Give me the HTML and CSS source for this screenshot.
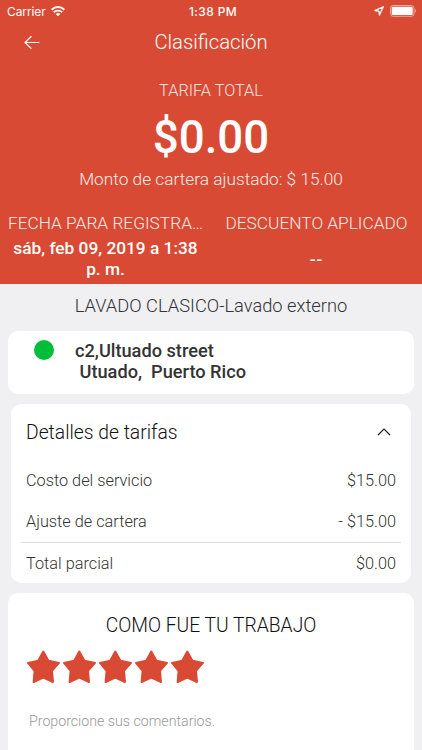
FILE: index.html
```html
<!DOCTYPE html>
<html lang="es">
<head>
    <meta charset="UTF-8">
    <meta name="viewport" content="width=device-width, initial-scale=1.0">
    <title>Clasificación</title>
    <link rel="stylesheet" href="styles.css">
</head>
<body>
    <header class="hero">
        <div class="status-bar">
            <div class="status-left">
                <span class="carrier">Carrier</span>
                <svg class="wifi-icon" viewBox="0 0 14 10" width="14" height="10">
                    <path d="M0.6 3.7a9.2 9.2 0 0 1 12.8 0" fill="none" stroke="#fff" stroke-width="2"/>
                    <path d="M2.8 6.3a6 6 0 0 1 8.4 0" fill="none" stroke="#fff" stroke-width="1.9"/>
                    <path d="M4.7 8a3.3 3.3 0 0 1 4.6 0L7 10.2z" fill="#fff"/>
                </svg>
            </div>
            <span class="status-time">1:38 PM</span>
            <div class="status-right">
                <svg viewBox="0 0 10 10" width="10" height="10">
                    <path d="M9.3 0.8L0.9 4.5l4 0.6 0.6 4z" fill="none" stroke="#fff" stroke-width="1.3" stroke-linejoin="round"/>
                </svg>
                <svg viewBox="0 0 27 12" width="27" height="12">
                    <rect x="0.5" y="0.5" width="23.5" height="10.8" rx="2.6" fill="none" stroke="#fff" stroke-opacity="0.5"/>
                    <rect x="1.7" y="1.7" width="21" height="8.4" rx="1.3" fill="#fff"/>
                    <path d="M25 4v3.8c1.4-.6 1.4-3.2 0-3.8z" fill="#fff" fill-opacity="0.5"/>
                </svg>
            </div>
        </div>

        <nav class="nav-bar">
            <svg class="back-icon" viewBox="0 0 16 14" width="16" height="14">
                <path d="M15.3 7.5H1M7.4 1.2L1 7.5l6.4 6.2" fill="none" stroke="#fff" stroke-width="1.2"/>
            </svg>
            <h1 class="nav-title">Clasificación</h1>
        </nav>

        <p class="fare-label">TARIFA TOTAL</p>
        <p class="fare-total">$0.00</p>
        <p class="wallet-note">Monto de cartera ajustado: $ 15.00</p>

        <div class="summary">
            <div class="summary-item">
                <p class="summary-label">FECHA PARA REGISTRA…</p>
                <p class="summary-value">sáb, feb 09, 2019 a 1:38<br>p. m.</p>
            </div>
            <div class="summary-item">
                <p class="summary-label">DESCUENTO APLICADO</p>
                <p class="summary-value discount">--</p>
            </div>
        </div>
    </header>

    <main class="content">
        <h2 class="service-name">LAVADO CLASICO-Lavado externo</h2>

        <section class="card address-card">
            <span class="dot"></span>
            <p class="address">c2,Ultuado street
 Utuado,  Puerto Rico</p>
        </section>

        <section class="card details-card">
            <div class="details-header">
                <h3 class="details-title">Detalles de tarifas</h3>
                <svg viewBox="0 0 14 8" width="14" height="8">
                    <path d="M1 7l6-6 6 6" fill="none" stroke="#222" stroke-width="1.2"/>
                </svg>
            </div>
            <div class="fare-row"><span>Costo del servicio</span><span>$15.00</span></div>
            <div class="fare-row"><span>Ajuste de cartera</span><span>- $15.00</span></div>
            <div class="fare-row subtotal"><span>Total parcial</span><span>$0.00</span></div>
        </section>

        <section class="card rating-card">
            <h3 class="rating-title">COMO FUE TU TRABAJO</h3>
            <svg class="star-symbol" width="0" height="0">
                <symbol id="star" viewBox="0 0 34 34">
                    <path d="M16.3 1.6L21.4 10.8 32 12.9 25 20.8 26 32 16.3 27.6 6.6 32 7.6 20.8 1 12.9 11.2 10.8z" fill="#d94a34" stroke="#d94a34" stroke-width="2" stroke-linejoin="round"/>
                </symbol>
            </svg>
            <div class="stars">
                <svg class="star"><use href="#star"/></svg>
                <svg class="star"><use href="#star"/></svg>
                <svg class="star"><use href="#star"/></svg>
                <svg class="star"><use href="#star"/></svg>
                <svg class="star"><use href="#star"/></svg>
            </div>
            <p class="comment">Proporcione sus comentarios.</p>
        </section>
    </main>
</body>
</html>
```
FILE: styles.css
```css
* {
    margin: 0;
    padding: 0;
    box-sizing: border-box;
}

body {
    height: 750px;
    overflow: hidden;
    background-color: #f0f0f3;
    color: #333;
    font-family: Roboto, Arial, sans-serif;
    font-weight: 300;
}

svg {
    display: block;
}

.hero {
    height: 284px;
    background-color: #d84a33;
    color: #fff;
    text-align: center;
}

.status-bar {
    display: grid;
    grid-template-columns: 1fr auto 1fr;
    align-items: center;
    height: 22px;
    padding: 0 5px 0 7px;
    font-family: Inter, sans-serif;
    font-size: 12px;
}

.status-left,
.status-right {
    display: flex;
    align-items: center;
    gap: 6px;
}

.status-left {
    gap: 5px;
}

.status-right {
    justify-content: flex-end;
}

.carrier {
    font-weight: 400;
    letter-spacing: -0.1px;
}

.status-time {
    padding-left: 2px;
    font-weight: 500;
    letter-spacing: 0.35px;
}

.nav-bar {
    display: grid;
    grid-template-columns: 16px 1fr 16px;
    align-items: center;
    height: 40px;
    padding: 0 24px;
}

.nav-title {
    font-size: 20.3px;
    font-weight: 300;
}

.fare-label {
    margin-top: 18px;
    font-size: 16.3px;
    line-height: 21px;
    opacity: 0.85;
}

.fare-total {
    margin-top: 12px;
    font-size: 45.7px;
    font-weight: 500;
    line-height: 50px;
}

.wallet-note {
    margin-top: 6px;
    font-size: 17.3px;
    line-height: 21px;
    opacity: 0.9;
}

.summary {
    display: grid;
    grid-template-columns: 1fr 1fr;
    margin-top: 23px;
}

.summary-label {
    font-size: 17.3px;
    line-height: 21px;
    white-space: nowrap;
    opacity: 0.9;
}

.summary-item {
    display: flex;
    flex-direction: column;
    align-items: center;
}

.summary-value {
    display: flex;
    align-items: center;
    height: 50px;
    font-size: 17.3px;
    font-weight: 500;
    line-height: 21px;
}

.discount {
    letter-spacing: 0.8px;
}

.service-name {
    height: 47px;
    font-size: 18.3px;
    font-weight: 300;
    line-height: 43px;
    text-align: center;
}

.card {
    margin: 0 8px;
    background-color: #fff;
    border-radius: 10px;
}

.address-card {
    display: flex;
    height: 63px;
    padding: 9px 26px;
}

.dot {
    width: 20px;
    height: 20px;
    margin-right: 21px;
    background-color: #00bd3b;
    border-radius: 50%;
}

.address {
    font-size: 18.2px;
    font-weight: 500;
    line-height: 21px;
    white-space: pre;
}

.details-card {
    height: 179px;
    margin: 10px 11px;
    padding: 0 10px;
}

.details-header {
    display: flex;
    justify-content: space-between;
    align-items: center;
    height: 56px;
    padding: 0 10px 0 5px;
    color: #111;
}

.details-title {
    font-size: 19.3px;
    font-weight: 300;
}

.fare-row {
    display: flex;
    justify-content: space-between;
    align-items: center;
    height: 41px;
    padding: 0 5px;
    font-size: 16.3px;
}

.subtotal {
    border-top: 1px solid #ddd;
}

.rating-card {
    height: 180px;
    padding: 21px 18px;
}

.rating-title {
    color: #111;
    font-size: 19.3px;
    font-weight: 300;
    line-height: 24px;
    text-align: center;
}

.stars {
    display: flex;
    gap: 2px;
    margin: 12px 1px 0;
}

.star {
    width: 34px;
    height: 34px;
}

.comment {
    margin: 27px 3px 0;
    color: #999;
    font-size: 14.2px;
    line-height: 20px;
}
```
